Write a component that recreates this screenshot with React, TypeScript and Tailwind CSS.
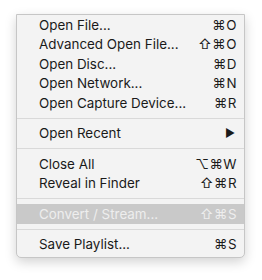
const font = { fontFamily: "Inter, 'DejaVu Sans', sans-serif" };

type Item =
  | { kind: "sep" }
  | { kind: "item"; label: string; keys?: string; sub?: boolean; disabled?: boolean };

const ITEMS: Item[] = [
  { kind: "item", label: "Open File...", keys: "⌘O" },
  { kind: "item", label: "Advanced Open File...", keys: "⇧⌘O" },
  { kind: "item", label: "Open Disc...", keys: "⌘D" },
  { kind: "item", label: "Open Network...", keys: "⌘N" },
  { kind: "item", label: "Open Capture Device...", keys: "⌘R" },
  { kind: "sep" },
  { kind: "item", label: "Open Recent", sub: true },
  { kind: "sep" },
  { kind: "item", label: "Close All", keys: "⌥⌘W" },
  { kind: "item", label: "Reveal in Finder", keys: "⇧⌘R" },
  { kind: "sep" },
  { kind: "item", label: "Convert / Stream...", keys: "⇧⌘S", disabled: true },
  { kind: "sep" },
  { kind: "item", label: "Save Playlist...", keys: "⌘S" },
];

export default function App() {
  return (
    <div className="w-[262px] h-[280px] bg-white pt-[14px] pl-[16px]" style={font}>
      <div className="w-[229px] border border-[#c6c6c6] bg-[#f3f3f3] rounded-b-[5px] pb-[3px] shadow-[0_4px_12px_rgba(0,0,0,0.18)] text-[13.4px]">
        {ITEMS.map((it, i) =>
          it.kind === "sep" ? (
            <div key={i} className="h-[11px] flex items-center">
              <div className="w-full h-px bg-[#d9d9d9]" />
            </div>
          ) : (
            <div
              key={i}
              className={
                "h-[19.5px] flex items-center justify-between pl-[22px] pr-[7px] " +
                (it.disabled ? "bg-[#c9c9c9] text-[#eeeeee]" : "text-[#1a1a1a]")
              }
            >
              <span>{it.label}</span>
              {it.sub ? (
                <span className="text-[11px] pr-[2px]">▶</span>
              ) : (
                <span className="tracking-[0.5px]">{it.keys}</span>
              )}
            </div>
          )
        )}
      </div>
    </div>
  );
}
